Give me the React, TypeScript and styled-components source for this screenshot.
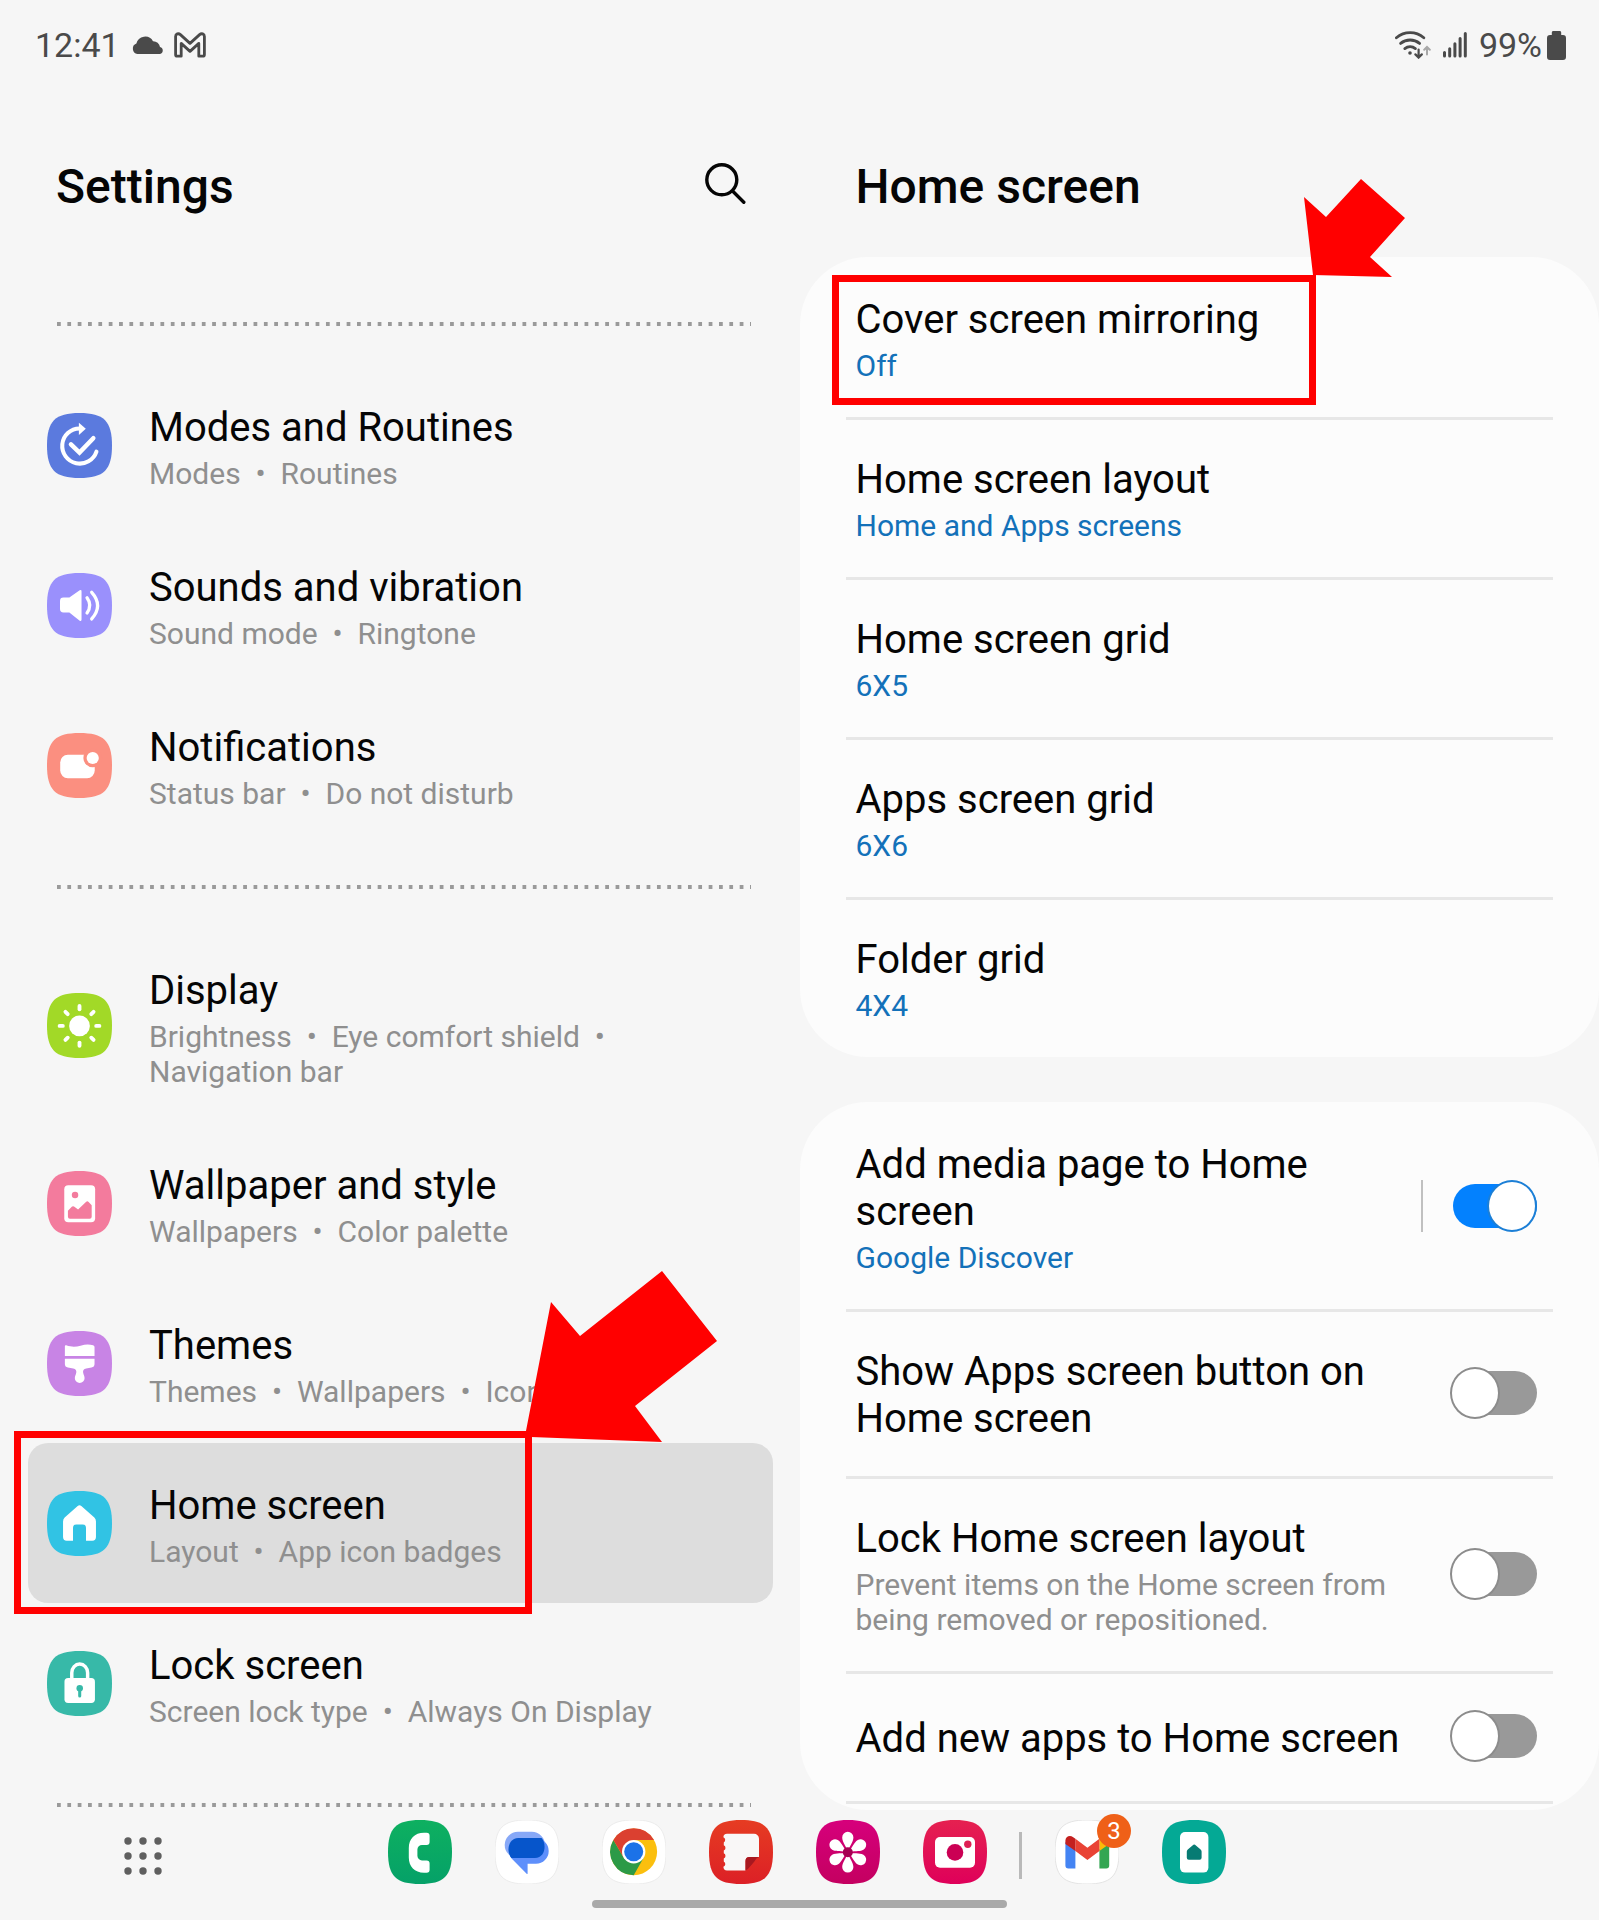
import React from "react";
import styled, { createGlobalStyle } from "styled-components";

const GlobalStyle = createGlobalStyle`
  *, *::before, *::after { box-sizing: border-box; }
  body {
    margin: 0;
    background: #f6f6f6;
    color: #050505;
    font-family: Roboto, "Noto Sans", sans-serif;
  }
  h1, h2, p, ul { margin: 0; padding: 0; }
  ul { list-style: none; }
  svg { display: block; flex: none; }
`;

const HIGHLIGHT = "#ff0000";

/* ---------- page frame ---------- */

const Page = styled.div`
  display: flex;
  flex-direction: column;
  min-height: 100vh;
  overflow-x: hidden;
`;

const StatusBar = styled.header`
  display: flex;
  justify-content: space-between;
  padding: 25px 33px 0 35px;
  font-size: 34px;
  line-height: 40px;
  color: #4a4a4a;
`;

const StatusGroup = styled.div<{ $gap: number }>`
  display: flex;
  align-items: center;
  gap: ${(p) => p.$gap}px;
`;

const Columns = styled.main`
  display: grid;
  grid-template-columns: 1fr 1fr;
`;

const Column = styled.section`
  min-width: 0;
`;

const ColumnHeader = styled.div`
  display: flex;
  align-items: center;
  justify-content: space-between;
  padding: 94px 54px 42px 56px;
`;

const Heading = styled.h1`
  font-size: 48px;
  line-height: 56px;
  font-weight: 500;
`;

const PlainButton = styled.button`
  display: block;
  padding: 0;
  border: 0;
  background: none;
  color: inherit;
  font: inherit;
  text-align: left;
  cursor: pointer;
`;

const SearchButton = styled(PlainButton)`
  padding-bottom: 8px;
`;

const Title = styled.span`
  display: block;
  font-size: 40px;
  line-height: 47px;
`;

const Subtitle = styled.span<{ $accent?: boolean }>`
  display: block;
  margin-top: 5px;
  font-size: 30px;
  line-height: 35px;
  color: ${(p) => (p.$accent ? "#1371b9" : "#8f8f8f")};
`;

/* ---------- left pane ---------- */

const SettingsNav = styled.nav`
  padding: 25px 27px 0 28px;
`;

const DottedRule = styled.hr`
  height: 4px;
  margin: 40px 22px 39px 29px;
  border: 0;
  background: repeat-x left / calc(100% / 67) 4px
    linear-gradient(90deg, #9a9a9a 4px, transparent 4px);
  &:last-child { margin-bottom: 0; }
`;

const NavItem = styled.li`
  position: relative;
`;

const NavLink = styled.a<{ $active?: boolean }>`
  display: flex;
  align-items: center;
  gap: 37px;
  padding: 0 24px 0 19px;
  border-radius: 20px;
  background: ${(p) => (p.$active ? "#dddddd" : "transparent")};
  color: inherit;
  text-decoration: none;
`;

const RowText = styled.span`
  flex: 1;
  min-width: 0;
  padding: 39px 0 34px;
`;

/* ---------- right pane ---------- */

const Card = styled.ul<{ $clipped?: boolean }>`
  margin-bottom: ${(p) => (p.$clipped ? 0 : 45)}px;
  padding: 0 46px;
  border-radius: 68px;
  background: #fcfcfc;
  &::after {
    content: "";
    display: ${(p) => (p.$clipped ? "block" : "none")};
    height: 9px;
    box-shadow: inset 0 3px #e7e7e7;
  }
`;

const CardItem = styled.li`
  position: relative;
  & + & { box-shadow: inset 0 3px #e7e7e7; }
`;

const CardButton = styled(PlainButton)`
  display: flex;
  width: 100%;
  padding: 0 10px;
`;

const SwitchRow = styled.label`
  display: flex;
  align-items: center;
  min-height: 130px;
  padding: 0 16px 0 10px;
  cursor: pointer;
`;

const SwitchArea = styled.span<{ $separated?: boolean }>`
  display: flex;
  align-items: center;
  height: 52px;
  margin-left: 20px;
  padding-left: 30px;
  border-left: 2px solid ${(p) => (p.$separated ? "#c0c0c0" : "transparent")};
`;

const Switch = styled.input`
  appearance: none;
  display: flex;
  align-items: center;
  width: 84px;
  height: 44px;
  margin: 0;
  border-radius: 22px;
  background: #999999;
  cursor: pointer;
  &::before {
    content: "";
    flex: none;
    width: 50px;
    height: 52px;
    margin: -4px 0 -4px -3px;
    border: 2px solid #8c8c8c;
    border-radius: 50%;
    background: #ffffff;
  }
  &:checked {
    justify-content: flex-end;
    background: #0381fe;
  }
  &:checked::before { border-color: #1c7fd6; }
`;

/* ---------- callouts laid over the rows ---------- */

const Callout = styled.div<{ $top: number; $width: number; $height: number }>`
  position: absolute;
  z-index: 2;
  top: ${(p) => p.$top}px;
  left: -14px;
  width: ${(p) => p.$width}px;
  height: ${(p) => p.$height}px;
  border: 7px solid ${HIGHLIGHT};
  pointer-events: none;
`;

const CalloutArrow = styled.svg`
  position: absolute;
  right: -7px;
  bottom: 100%;
  overflow: visible;
  width: 1px;
  height: 1px;
  fill: ${HIGHLIGHT};
`;

/* ---------- dock ---------- */

const Dock = styled.footer`
  display: flex;
  flex-direction: column;
  gap: 16px;
  margin-top: auto;
  padding: 10px 0 12px;
`;

const DockRow = styled.div`
  display: grid;
  grid-template-columns: 1fr auto 1fr;
  align-items: center;
  padding-left: 15px;
`;

const AppsButton = styled(PlainButton)`
  justify-self: start;
  margin: 7px 0 0 109px;
`;

const DockApps = styled.div`
  display: flex;
  align-items: center;
  gap: 43px;
`;

const DockGroup = styled.div`
  display: flex;
  gap: 43px;
  & + & {
    position: relative;
    margin-left: 25px;
  }
  & + &::before {
    content: "";
    position: absolute;
    left: -36px;
    top: 12px;
    width: 3px;
    height: 47px;
    background: #b9b9b9;
  }
`;

const DockApp = styled(PlainButton)`
  position: relative;
`;

const Badge = styled.span`
  position: absolute;
  top: -6px;
  right: -12px;
  width: 34px;
  height: 34px;
  border-radius: 50%;
  background: #ef6018;
  color: #ffffff;
  font-size: 24px;
  line-height: 34px;
  text-align: center;
`;

const GestureBar = styled.div`
  align-self: center;
  width: 26%;
  height: 8px;
  border-radius: 4px;
  background: #a9a9a9;
`;

/* ---------- icons ---------- */

const SQUIRCLE = "M32 0C56 0 64 8 64 32S56 64 32 64 0 56 0 32 8 0 32 0Z";

function Tile({ fill, size = 64, stroke, children }: {
  fill: string; size?: number; stroke?: string; children: React.ReactNode;
}) {
  return (
    <svg width={size} height={size} viewBox="0 0 64 64" aria-hidden="true">
      <path d={SQUIRCLE} fill={fill} stroke={stroke} />
      {children}
    </svg>
  );
}

const ModesIcon = (
  <Tile size={65} fill="#5b7ade">
    <g fill="none" stroke="#fff" strokeWidth="4" strokeLinecap="round">
      <path d="M32 15.2A17.3 17.3 0 1 0 48.7 38" />
      <path d="M23.6 30.8L32 39 45.6 24.8" strokeWidth="4.4" />
    </g>
    <path d="M31.4 9.6L38.2 15.4 31.4 21.6Z" fill="#fff" />
  </Tile>
);

const SoundIcon = (
  <Tile size={65} fill="#9a90fc">
    <path d="M12.8 27.5a3.4 3.4 0 0 1 3.4-3.4H22L32.2 17.1Q34 16 34 18.2V45.8Q34 48 32.2 46.9L22 38.9H16.2a3.4 3.4 0 0 1-3.4-3.4Z" fill="#fff" />
    <g fill="none" stroke="#fff" strokeWidth="3.2" strokeLinecap="round">
      <path d="M39.4 24.4Q44.8 31.8 39.4 39.4" />
      <path d="M44 19Q55.6 32 44 45.2" />
    </g>
  </Tile>
);

const NotificationIcon = (
  <Tile size={65} fill="#fb8f80">
    <rect x="13" y="21.5" width="34" height="23" rx="7.5" fill="#fff" />
    <circle cx="45" cy="24.6" r="9.2" fill="#fb8f80" />
    <circle cx="45" cy="24.6" r="6" fill="#fff" />
  </Tile>
);

const DisplayIcon = (
  <Tile size={65} fill="#a2d927">
    <circle cx="32" cy="32.4" r="10.2" fill="#fff" />
    <g stroke="#fff" strokeWidth="3.8" strokeLinecap="round">
      {[0, 45, 90, 135, 180, 225, 270, 315].map((a) => (
        <path key={a} d="M32 12.8v3.2" transform={`rotate(${a} 32 32.4)`} />
      ))}
    </g>
  </Tile>
);

const WallpaperIcon = (
  <Tile size={65} fill="#f37b9d">
    <rect x="17" y="14" width="30.4" height="36.4" rx="4" fill="#fff" />
    <circle cx="27.6" cy="23.6" r="3.2" fill="#f37b9d" />
    <path d="M20.6 39.2L24.4 35.2Q25.4 34.2 26.6 35L30.6 37.8 38.6 30.2Q39.8 29.2 41 30.4L44 33.6V45a2 2 0 0 1-2 2H22.6a2 2 0 0 1-2-2Z" fill="#f37b9d" />
  </Tile>
);

const ThemesIcon = (
  <Tile size={65} fill="#c884e5">
    <path d="M17.6 15Q17.6 13.6 19 14C24 15.8 28 15.8 33 14.4 38 13 42 13.2 45.4 14Q46.8 14.4 46.8 15.8V24.6H17.6Z" fill="#fff" />
    <path d="M17.6 27.4H46.8V32.6Q46.8 35.6 43.8 36L38.6 36.8C36 37.4 35.2 38.6 35.6 41 36 43.2 37 44.4 37 46.4A4.8 4.8 0 0 1 27.4 46.4C27.4 44.4 28.4 43.2 28.8 41 29.2 38.6 28.4 37.4 25.8 36.8L20.6 36Q17.6 35.6 17.6 32.6Z" fill="#fff" />
  </Tile>
);

const HomeIcon = (
  <Tile size={65} fill="#31c3e4">
    <path d="M30.2 14.8Q32 13.2 33.8 14.8L46.6 26.2Q48.2 27.6 48.2 30V45.4A3.6 3.6 0 0 1 44.6 49H38.4V36.4A3.4 3.4 0 0 0 35 33H29A3.4 3.4 0 0 0 25.6 36.4V49H19.4A3.6 3.6 0 0 1 15.8 45.4V30Q15.8 27.6 17.4 26.2Z" fill="#fff" />
  </Tile>
);

const LockIcon = (
  <Tile size={65} fill="#37b9a8">
    <path d="M24.4 30V21.4a7.8 8.6 0 0 1 15.6 0V30" fill="none" stroke="#fff" strokeWidth="3.4" />
    <rect x="17.2" y="26.6" width="30" height="24.6" rx="3.6" fill="#fff" />
    <circle cx="32.2" cy="36.6" r="3.2" fill="#37b9a8" />
    <path d="M32.2 38v6.4" stroke="#37b9a8" strokeWidth="3" strokeLinecap="round" />
  </Tile>
);

const PhoneApp = (
  <Tile fill="url(#phoneGreen)">
    <defs>
      <linearGradient id="phoneGreen" x1="0" y1="0" x2="0" y2="1">
        <stop offset="0" stopColor="#0eb060" /><stop offset="1" stopColor="#05a168" />
      </linearGradient>
    </defs>
    <path d="M36 12.7H38.6A3 3 0 0 1 41.6 15.7V22A3 3 0 0 1 38.6 25H34A4.6 4.6 0 0 0 29.4 29.6V35.8A4.6 4.6 0 0 0 34 40.4H38.6A3 3 0 0 1 41.6 43.4V49.8A3 3 0 0 1 38.6 52.8H36C26.6 52.8 20.8 46.6 20.8 37.6V28C20.8 18.8 26.6 12.7 36 12.7Z" fill="#fff" />
  </Tile>
);

const MessagesApp = (
  <Tile fill="#ffffff" stroke="#ececec">
    <rect x="9.7" y="11.8" width="40.3" height="26.4" rx="13.2" fill="#87a8f7" />
    <path d="M24 18.4H41A12.4 12.4 0 0 1 41 43.8H32.6V53.2Q32.6 54.8 31.4 53.6L16.6 38.4C12 33 13 18.4 24 18.4Z" fill="#5e8ffb" />
    <path d="M23.4 18H46.6C51.4 23 51.2 38 39.8 38H16.4C11 32 13 18 23.4 18Z" fill="#0655cb" />
  </Tile>
);

const ChromeApp = (
  <Tile fill="#ffffff" stroke="#ececec">
    <circle cx="31.7" cy="31.8" r="23.4" fill="#fbbf0e" />
    <path d="M31.7 31.8L11.4 20.1A23.4 23.4 0 0 1 52 20.1H31.7Z" fill="#db4030" />
    <path d="M11.4 20.1A23.4 23.4 0 0 0 31.7 55.2L41.8 37.6 31.7 31.8 21.6 37.6Z" fill="#2c9a47" />
    <path d="M11.4 20.1L21.6 37.6 31.7 31.8V20.1Z" fill="#db4030" />
    <circle cx="31.7" cy="31.8" r="11.7" fill="#fff" />
    <circle cx="31.7" cy="31.8" r="9.5" fill="#1b72e8" />
  </Tile>
);

const NotesApp = (
  <Tile fill="url(#notesRed)">
    <defs>
      <linearGradient id="notesRed" x1="0" y1="0" x2="0" y2="1">
        <stop offset="0" stopColor="#e63c22" /><stop offset="1" stopColor="#dc2026" />
      </linearGradient>
    </defs>
    <path d="M18 13.7H45A5 5 0 0 1 50 18.7V37H40.5A4 4 0 0 0 36.5 41V50.4H18A3.6 3.6 0 0 1 14.4 46.8A3 3 0 0 0 14.8 41.4V38.6A3 3 0 0 0 14.8 33.2V30.6A3 3 0 0 0 14.8 25.2V22.6A3 3 0 0 0 14.4 17.3A3.6 3.6 0 0 1 18 13.7Z" fill="#f9f7f7" />
    <path d="M36.5 50.4V41A4 4 0 0 1 40.5 37H50Q47 38 45.4 41.4L42 45.4Q39 49.4 36.5 50.4Z" fill="#a81820" />
  </Tile>
);

const GalleryApp = (
  <Tile fill="url(#galleryPink)">
    <defs>
      <linearGradient id="galleryPink" x1="0" y1="0" x2="0" y2="1">
        <stop offset="0" stopColor="#d6007c" /><stop offset="1" stopColor="#c40060" />
      </linearGradient>
    </defs>
    {[0, 60, 120, 180, 240, 300].map((a) => (
      <path key={a} transform={`rotate(${a} 31.8 32.2)`} fill="#fff"
        d="M31.8 32.2C30.6 26 26.2 22.4 26.2 17.4A5.6 5.6 0 0 1 37.4 17.4C37.4 22.4 33 26 31.8 32.2Z" />
    ))}
    <circle cx="31.8" cy="32.2" r="5" fill="#a60052" />
  </Tile>
);

const CameraApp = (
  <Tile fill="url(#cameraRed)">
    <defs>
      <linearGradient id="cameraRed" x1="0" y1="0" x2="0" y2="1">
        <stop offset="0" stopColor="#e52150" /><stop offset="1" stopColor="#df005a" />
      </linearGradient>
    </defs>
    <rect x="12" y="17" width="40" height="30.8" rx="5" fill="#fff" />
    <circle cx="32" cy="32.4" r="8.3" fill="#cb0054" />
    <circle cx="44.8" cy="24.2" r="3.7" fill="#de1f53" />
  </Tile>
);

const GmailApp = (
  <Tile fill="#ffffff" stroke="#e4e4e4">
    <path d="M10.4 22L20.4 29.4V48.4H13.4A3 3 0 0 1 10.4 45.4Z" fill="#4484f3" />
    <path d="M54.2 22L44.4 29.4V48.4H51.2A3 3 0 0 0 54.2 45.4Z" fill="#33a652" />
    <path d="M44.4 18.8L46.4 17.2C50 14.4 54.2 16.6 54.2 20.6V24L44.4 31Z" fill="#fbbb08" />
    <path d="M20.4 18.8L32.4 27.8 44.4 18.8V31L32.4 40 20.4 31Z" fill="#e94335" />
    <path d="M20.4 18.8L18.2 17.2C14.8 14.4 10.4 16.6 10.4 20.6V24L20.4 31Z" fill="#c4201f" />
  </Tile>
);

const SmartHomeApp = (
  <Tile fill="#04a995">
    <rect x="18" y="12" width="28.4" height="40.6" rx="5" fill="#fff" />
    <path d="M31.4 24.8Q32.2 24.2 33 24.8L38.6 29.4Q39.6 30.2 39.6 31.4V37.8A2 2 0 0 1 37.6 39.8H26.8A2 2 0 0 1 24.8 37.8V31.4Q24.8 30.2 25.8 29.4Z" fill="#067b73" />
  </Tile>
);

const SearchIcon = (
  <svg width="41" height="41" viewBox="0 0 41 41" fill="none" stroke="#050505" strokeWidth="3.4" strokeLinecap="round" aria-hidden="true">
    <circle cx="16.8" cy="16.8" r="15" />
    <path d="M27.8 28.2L38.8 39.2" />
  </svg>
);

const CloudIcon = (
  <svg width="32" height="20" viewBox="0 0 32 20" fill="#4a4a4a" aria-hidden="true">
    <path d="M5.4 19A5.4 5.4 0 0 1 4.4 8.6 9 9 0 0 1 21 6.2 6.8 6.8 0 0 1 28 12 3.6 3.6 0 0 1 28 19Z" />
  </svg>
);

const MailIcon = (
  <svg width="32" height="26" viewBox="0 0 32 26" fill="none" stroke="#4a4a4a" strokeWidth="2.8" strokeLinejoin="round" aria-hidden="true">
    <path d="M1.6 4.6C1.6 1.8 4.4.9 6.4 2.6L16 11.4 25.6 2.6C27.6.9 30.4 1.8 30.4 4.6V22.4A1.8 1.8 0 0 1 28.6 24.2H24.8V11.4L16 19.4 7.2 11.4V24.2H3.4A1.8 1.8 0 0 1 1.6 22.4Z" />
  </svg>
);

const WifiIcon = (
  <svg width="36" height="28" viewBox="0 0 36 28" fill="none" stroke="#4a4a4a" strokeWidth="2.8" strokeLinecap="round" aria-hidden="true">
    <path d="M1.4 6.8A21 21 0 0 1 28.8 6.8" />
    <path d="M5.6 12.4A15 15 0 0 1 24.6 12.4" />
    <path d="M9.8 17.6A8.6 8.6 0 0 1 20.4 17.6" />
    <circle cx="15" cy="22" r="1.8" fill="#4a4a4a" stroke="none" />
    <path d="M23.6 18.6V26M20.4 23.4L23.6 26.6 26.8 23.4" strokeWidth="2.2" />
    <path d="M32 23.4V16.4M29.2 18.8L32 16 34.8 18.8" stroke="#a8a8a8" strokeWidth="2" />
  </svg>
);

const SignalIcon = (
  <svg width="24" height="26" viewBox="0 0 24 26" stroke="#4a4a4a" strokeWidth="3" strokeLinecap="round" aria-hidden="true">
    <path d="M1.5 20.6V24M6.7 16.8V24M11.9 11.8V24M17.1 6.6V24M22.3 1.6V24" />
  </svg>
);

const BatteryIcon = (
  <svg width="19" height="29" viewBox="0 0 19 29" fill="#4a4a4a" aria-hidden="true">
    <path d="M6 0H13A1.4 1.4 0 0 1 14.2 1.4V4H16A3 3 0 0 1 19 7V26A3 3 0 0 1 16 29H3A3 3 0 0 1 0 26V7A3 3 0 0 1 3 4H4.8V1.4A1.4 1.4 0 0 1 6 0Z" />
  </svg>
);

const AppsIcon = (
  <svg width="38" height="38" viewBox="0 0 38 38" fill="#5f5f5f" aria-hidden="true">
    {[4, 19, 34].flatMap((y) => [4, 19, 34].map((x) => <circle key={`${x}-${y}`} cx={x} cy={y} r="3.7" />))}
  </svg>
);

/* ---------- data ---------- */

const SEP = "\u00a0\u00a0•\u00a0 ";

type NavEntry = { title: string; parts: string[]; icon: React.ReactNode; active?: boolean };

const navGroups: NavEntry[][] = [
  [
    { title: "Modes and Routines", parts: ["Modes", "Routines"], icon: ModesIcon },
    { title: "Sounds and vibration", parts: ["Sound mode", "Ringtone"], icon: SoundIcon },
    { title: "Notifications", parts: ["Status bar", "Do not disturb"], icon: NotificationIcon },
  ],
  [
    { title: "Display", parts: ["Brightness", "Eye comfort shield", "Navigation bar"], icon: DisplayIcon },
    { title: "Wallpaper and style", parts: ["Wallpapers", "Color palette"], icon: WallpaperIcon },
    { title: "Themes", parts: ["Themes", "Wallpapers", "Icons"], icon: ThemesIcon },
    { title: "Home screen", parts: ["Layout", "App icon badges"], icon: HomeIcon, active: true },
    { title: "Lock screen", parts: ["Screen lock type", "Always On Display"], icon: LockIcon },
  ],
];

const layoutOptions = [
  { title: "Cover screen mirroring", value: "Off", marked: true },
  { title: "Home screen layout", value: "Home and Apps screens" },
  { title: "Home screen grid", value: "6X5" },
  { title: "Apps screen grid", value: "6X6" },
  { title: "Folder grid", value: "4X4" },
];

const switches = [
  { id: "media-page", title: "Add media page to Home screen", detail: "Google Discover", accent: true, separated: true, on: true },
  { id: "apps-button", title: "Show Apps screen button on Home screen" },
  { id: "lock-layout", title: "Lock Home screen layout", detail: "Prevent items on the Home screen from being removed or repositioned." },
  { id: "new-apps", title: "Add new apps to Home screen" },
];

const dockGroups: { name: string; icon: React.ReactNode; badge?: number }[][] = [
  [
    { name: "Phone", icon: PhoneApp },
    { name: "Messages", icon: MessagesApp },
    { name: "Chrome", icon: ChromeApp },
    { name: "Notes", icon: NotesApp },
    { name: "Gallery", icon: GalleryApp },
    { name: "Camera", icon: CameraApp },
  ],
  [
    { name: "Gmail", icon: GmailApp, badge: 3 },
    { name: "Smart home", icon: SmartHomeApp },
  ],
];

/* ---------- app ---------- */

export default function App() {
  return (
    <Page>
      <GlobalStyle />
      <StatusBar>
        <StatusGroup $gap={10}>
          <StatusGroup $gap={12}>
            <span>12:41</span>
            {CloudIcon}
          </StatusGroup>
          {MailIcon}
        </StatusGroup>
        <StatusGroup $gap={5}>
          <StatusGroup $gap={12}>
            {WifiIcon}
            {SignalIcon}
            <span>99%</span>
          </StatusGroup>
          {BatteryIcon}
        </StatusGroup>
      </StatusBar>

      <Columns>
        <Column>
          <ColumnHeader>
            <Heading>Settings</Heading>
            <SearchButton aria-label="Search">{SearchIcon}</SearchButton>
          </ColumnHeader>
          <SettingsNav>
            {navGroups.map((group, i) => (
              <React.Fragment key={i}>
                <DottedRule />
                <ul>
                  {group.map((item) => (
                    <NavItem key={item.title}>
                      <NavLink href="#" $active={item.active}>
                        {item.icon}
                        <RowText>
                          <Title>{item.title}</Title>
                          <Subtitle>{item.parts.join(SEP)}</Subtitle>
                        </RowText>
                      </NavLink>
                      {item.active && (
                        <Callout $top={-12} $width={518} $height={183}>
                          <CalloutArrow>
                            <path d="M-6 -1L20 -135 49 -101 131 -166 186 -96 104 -31 131 5 0 0Z" />
                          </CalloutArrow>
                        </Callout>
                      )}
                    </NavItem>
                  ))}
                </ul>
              </React.Fragment>
            ))}
            <DottedRule />
          </SettingsNav>
        </Column>

        <Column>
          <ColumnHeader>
            <Heading as="h2">Home screen</Heading>
          </ColumnHeader>
          <Card>
            {layoutOptions.map((option) => (
              <CardItem key={option.title}>
                <CardButton>
                  <RowText>
                    <Title>{option.title}</Title>
                    <Subtitle $accent>{option.value}</Subtitle>
                  </RowText>
                </CardButton>
                {option.marked && (
                  <Callout $top={18} $width={484} $height={130}>
                    <CalloutArrow>
                      <path d="M-2 -6L-11 -84 11 -64 46 -102 90 -63 55 -24 77 -4Z" />
                    </CalloutArrow>
                  </Callout>
                )}
              </CardItem>
            ))}
          </Card>
          <Card $clipped>
            {switches.map((item) => (
              <CardItem key={item.id}>
                <SwitchRow htmlFor={item.id}>
                  <RowText>
                    <Title>{item.title}</Title>
                    {item.detail && <Subtitle $accent={item.accent}>{item.detail}</Subtitle>}
                  </RowText>
                  <SwitchArea $separated={item.separated}>
                    <Switch id={item.id} type="checkbox" role="switch" defaultChecked={item.on} />
                  </SwitchArea>
                </SwitchRow>
              </CardItem>
            ))}
          </Card>
        </Column>
      </Columns>

      <Dock>
        <DockRow>
          <AppsButton aria-label="All apps">{AppsIcon}</AppsButton>
          <DockApps>
            {dockGroups.map((group, i) => (
              <DockGroup key={i}>
                {group.map((app) => (
                  <DockApp key={app.name} aria-label={app.name}>
                    {app.icon}
                    {app.badge && <Badge>{app.badge}</Badge>}
                  </DockApp>
                ))}
              </DockGroup>
            ))}
          </DockApps>
        </DockRow>
        <GestureBar />
      </Dock>
    </Page>
  );
}
